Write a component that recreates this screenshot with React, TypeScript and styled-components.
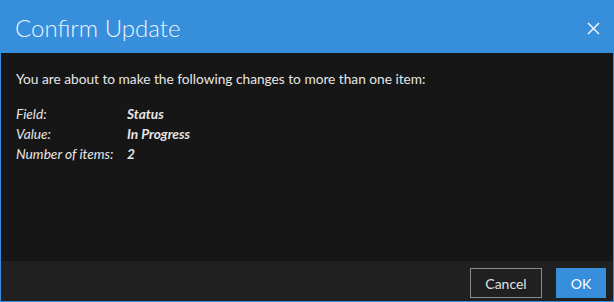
import React from "react";
import styled, { createGlobalStyle } from "styled-components";

const blue = "#378edb";

const GlobalStyle = createGlobalStyle`
  html, body {
    margin: 0;
    padding: 0;
    background: #161616;
  }
  * {
    box-sizing: border-box;
  }
`;

const Dialog = styled.div`
  width: 614px;
  height: 302px;
  display: flex;
  flex-direction: column;
  border: 1px solid ${blue};
  background: #161616;
  font-family: Lato, "Liberation Sans", sans-serif;
  color: #e6e6e6;
`;

const Header = styled.div`
  height: 52px;
  flex-shrink: 0;
  display: flex;
  align-items: center;
  justify-content: space-between;
  padding: 0 13px 0 14px;
  background: ${blue};
`;

const Title = styled.h1`
  margin: 0;
  font-size: 24px;
  font-weight: 300;
  color: #eef4fb;
`;

const CloseButton = styled.button`
  width: 13px;
  height: 13px;
  margin-top: 2px;
  padding: 0;
  border: 0;
  background: none;
  display: flex;
  cursor: pointer;
`;

const Body = styled.div`
  flex: 1;
  padding: 16px 15px 0;
  font-size: 13.7px;
`;

const Intro = styled.p`
  margin: 0 0 15px;
  line-height: 20px;
`;

const Details = styled.div`
  display: grid;
  grid-template-columns: 111px auto;
  line-height: 20px;
`;

const Label = styled.span`
  font-style: italic;
`;

const Value = styled.span`
  font-style: italic;
  font-weight: 700;
`;

const Footer = styled.div`
  height: 40px;
  flex-shrink: 0;
  display: flex;
  justify-content: flex-end;
  align-items: flex-start;
  gap: 14px;
  padding: 7px 7px 0;
  background: #202020;
`;

const Button = styled.button<{ $primary?: boolean }>`
  height: 30px;
  padding: 0 ${(p) => (p.$primary ? "13px" : "14px")};
  min-width: ${(p) => (p.$primary ? "50px" : "72px")};
  font-family: Lato, "Liberation Sans", sans-serif;
  font-size: 14px;
  color: ${(p) => (p.$primary ? "#ffffff" : "#e0e0e0")};
  background: ${(p) => (p.$primary ? blue : "transparent")};
  border: 1px solid ${(p) => (p.$primary ? blue : "#8a8a8a")};
  cursor: pointer;
`;

const App: React.FC = () => {
  return (
    <>
      <GlobalStyle />
      <Dialog>
        <Header>
          <Title>Confirm Update</Title>
          <CloseButton aria-label="Close">
            <svg width="13" height="13" viewBox="0 0 13 13">
              <path
                d="M1 1 L12 12 M12 1 L1 12"
                stroke="#f0f5fb"
                strokeWidth="1.5"
              />
            </svg>
          </CloseButton>
        </Header>
        <Body>
          <Intro>
            You are about to make the following changes to more than one item:
          </Intro>
          <Details>
            <Label>Field:</Label>
            <Value>Status</Value>
            <Label>Value:</Label>
            <Value>In Progress</Value>
            <Label>Number of items:</Label>
            <Value>2</Value>
          </Details>
        </Body>
        <Footer>
          <Button>Cancel</Button>
          <Button $primary>OK</Button>
        </Footer>
      </Dialog>
    </>
  );
};

export default App;
